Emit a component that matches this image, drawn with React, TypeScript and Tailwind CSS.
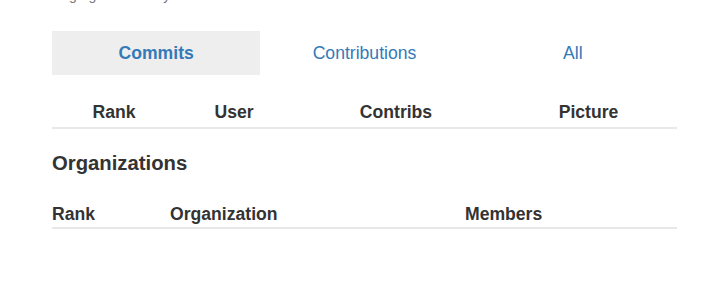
import React, { useState } from 'react';

const tabs = ['Commits', 'Contributions', 'All'];

const userColumns = [
  { label: 'Rank', width: 'w-[124px]' },
  { label: 'User', width: 'w-[116px]' },
  { label: 'Contribs', width: 'w-[208px]' },
  { label: 'Picture', width: 'flex-1' },
];

const orgColumns = [
  { label: 'Rank', width: 'w-[118px]' },
  { label: 'Organization', width: 'w-[295px]' },
  { label: 'Members', width: 'flex-1' },
];

export default function App() {
  const [active, setActive] = useState('Commits');

  return (
    <div className="min-h-[301px] bg-white overflow-hidden font-['Liberation_Sans',Arial,sans-serif] text-[#333]">
      <div className="ml-[52px] w-[625px]">
        {/* cut-off line from above */}
        <p className="-mt-[15px] text-[14px] leading-[20px] text-[#777]">
          Page generated by
        </p>

        {/* Tabs */}
        <div className="mt-[26px] flex">
          {tabs.map(tab => (
            <button
              key={tab}
              type="button"
              onClick={() => setActive(tab)}
              className={`flex-1 h-[44px] flex items-center justify-center text-[17.6px] text-[#337ab7] ${
                active === tab ? 'bg-[#eee] font-bold' : 'bg-transparent'
              }`}
            >
              {tab}
            </button>
          ))}
        </div>

        {/* Users table */}
        <div className="mt-[8px] flex border-b-2 border-[#e8e8e8] pt-[17px] pb-[2px]">
          {userColumns.map(col => (
            <div
              key={col.label}
              className={`${col.width} text-center text-[17.6px] leading-[25px] font-bold`}
            >
              {col.label}
            </div>
          ))}
        </div>

        {/* Organizations */}
        <h4 className="mt-[23px] text-[20.3px] leading-[1.1] font-bold">Organizations</h4>

        <div className="mt-[28px] flex border-b-2 border-[#e8e8e8]">
          {orgColumns.map(col => (
            <div
              key={col.label}
              className={`${col.width} text-left text-[17.6px] leading-[25px] font-bold`}
            >
              {col.label}
            </div>
          ))}
        </div>
      </div>
    </div>
  );
}
